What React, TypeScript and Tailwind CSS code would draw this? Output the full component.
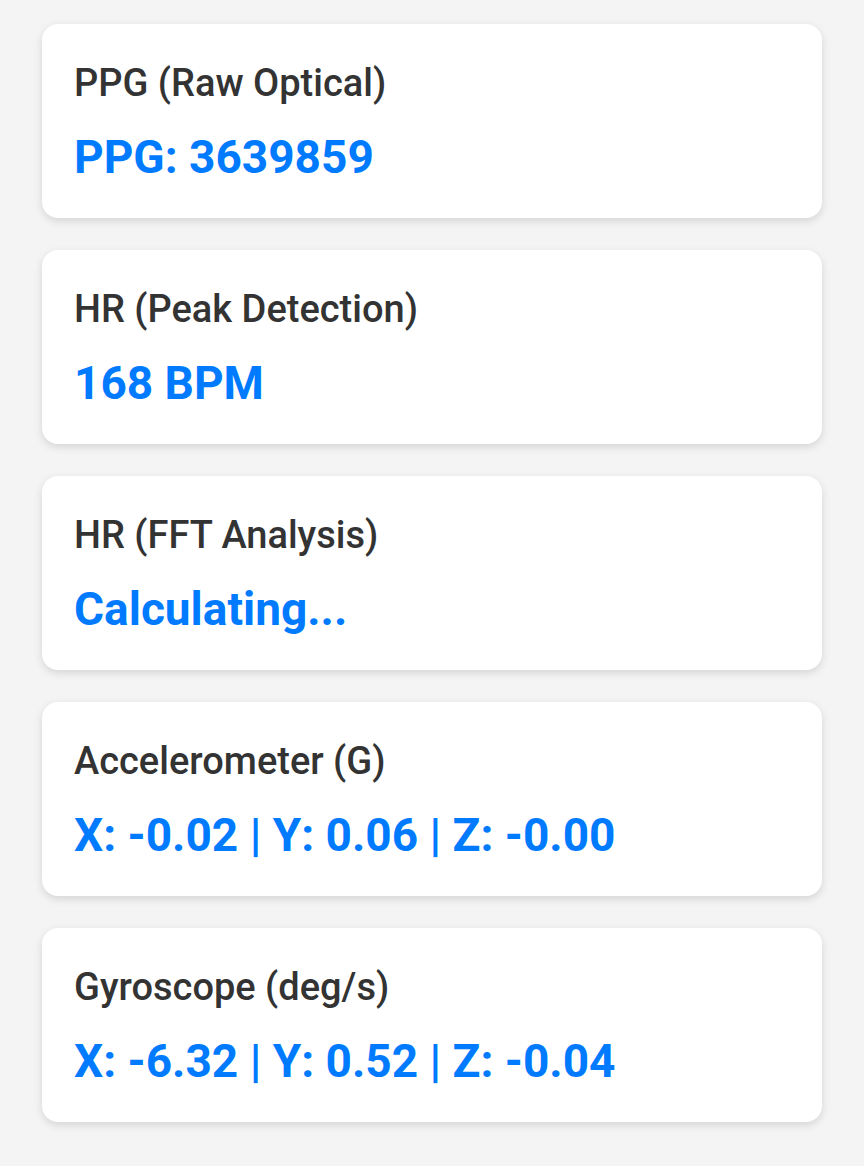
const readings = [
  { label: "PPG (Raw Optical)", value: "PPG: 3639859" },
  { label: "HR (Peak Detection)", value: "168 BPM" },
  { label: "HR (FFT Analysis)", value: "Calculating..." },
  { label: "Accelerometer (G)", value: "X: -0.02 | Y: 0.06 | Z: -0.00" },
  { label: "Gyroscope (deg/s)", value: "X: -6.32 | Y: 0.52 | Z: -0.04" },
];

function ReadingCard({ label, value }: { label: string; value: string }) {
  return (
    <div className="bg-white rounded-[16px] shadow-[0_3px_8px_rgba(0,0,0,0.13)] px-[32px] pt-[37px] pb-[34px]">
      <h3 className="text-[38px] leading-[44px] font-medium text-[#333333] mb-[25px]">
        {label}
      </h3>
      <div className="text-[46px] leading-[54px] font-bold text-[#007bff]">
        {value}
      </div>
    </div>
  );
}

export default function App() {
  return (
    <div
      className="min-h-screen bg-[#f4f4f4] px-[42px] pt-[24px] pb-[44px] flex flex-col gap-[32px]"
      style={{ fontFamily: "Roboto, 'Noto Sans', sans-serif" }}
    >
      {readings.map((r) => (
        <ReadingCard key={r.label} label={r.label} value={r.value} />
      ))}
    </div>
  );
}
